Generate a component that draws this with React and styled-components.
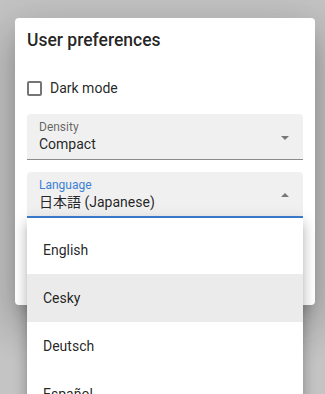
import React from "react";
import styled, { createGlobalStyle } from "styled-components";

const Global = createGlobalStyle`
  html, body {
    margin: 0;
    padding: 0;
    background: #c4c4c4;
    font-family: Roboto, "Noto Sans CJK JP", sans-serif;
    overflow: hidden;
  }
`;

const Page = styled.div`
  width: 325px;
  height: 394px;
  padding: 18px 10px 0 15px;
  box-sizing: border-box;
`;

const Dialog = styled.div`
  position: relative;
  width: 300px;
  height: 287px;
  box-sizing: border-box;
  padding: 0 12px;
  background: #fff;
  border-radius: 4px;
  box-shadow: 0 11px 15px -7px rgba(0, 0, 0, 0.2),
    0 24px 38px 3px rgba(0, 0, 0, 0.14), 0 9px 46px 8px rgba(0, 0, 0, 0.12);
  display: flex;
  flex-direction: column;
`;

const Title = styled.h2`
  margin: 10px 0 0;
  font-size: 17.5px;
  line-height: 24px;
  font-weight: 500;
  color: rgba(0, 0, 0, 0.87);
`;

const CheckRow = styled.label`
  margin-top: 26px;
  display: flex;
  align-items: center;
  gap: 8px;
  font-size: 14px;
  color: rgba(0, 0, 0, 0.87);
  height: 20px;
`;

const Box = styled.span`
  width: 15px;
  height: 15px;
  box-sizing: border-box;
  border: 2px solid rgba(0, 0, 0, 0.54);
  border-radius: 2px;
`;

const Field = styled.div`
  margin-top: ${(p) => p.$mt}px;
  height: 46px;
  box-sizing: border-box;
  background: #f0f0f0;
  border-radius: 4px 4px 0 0;
  border-bottom: ${(p) => (p.$focused ? "2px solid #3d7fd3" : "1px solid #8c8c8c")};
  padding: 6px 12px 0;
  display: flex;
  align-items: center;
  position: relative;
`;

const FieldText = styled.div`
  flex: 1;
  display: flex;
  flex-direction: column;
  align-self: flex-start;
`;

const Label = styled.span`
  font-size: 12px;
  line-height: 14px;
  color: ${(p) => (p.$focused ? "#3d7fd3" : "rgba(0, 0, 0, 0.6)")};
`;

const Value = styled.span`
  font-size: 14px;
  line-height: 20px;
  color: rgba(0, 0, 0, 0.87);
`;

const Arrow = styled.span`
  width: 0;
  height: 0;
  margin-right: 2px;
  margin-top: -4px;
  border-left: 4px solid transparent;
  border-right: 4px solid transparent;
  ${(p) =>
    p.$up
      ? "border-bottom: 4px solid rgba(0,0,0,0.5);"
      : "border-top: 4px solid rgba(0,0,0,0.5);"}
`;

const Menu = styled.ul`
  position: absolute;
  left: 12px;
  top: 200px;
  width: 276px;
  margin: 0;
  padding: 8px 0;
  list-style: none;
  background: #fff;
  box-shadow: 0 5px 5px -3px rgba(0, 0, 0, 0.2),
    0 8px 10px 1px rgba(0, 0, 0, 0.14), 0 3px 14px 2px rgba(0, 0, 0, 0.12);
`;

const Item = styled.li`
  height: 48px;
  padding: 0 16px;
  display: flex;
  align-items: center;
  font-size: 14px;
  color: rgba(0, 0, 0, 0.87);
  background: ${(p) => (p.$active ? "#ebebeb" : "transparent")};
`;

const languages = ["English", "Cesky", "Deutsch", "Español"];

export default function App() {
  return (
    <>
      <Global />
      <Page>
        <Dialog>
          <Title>User preferences</Title>
          <CheckRow>
            <Box />
            Dark mode
          </CheckRow>
          <Field $mt={16}>
            <FieldText>
              <Label>Density</Label>
              <Value>Compact</Value>
            </FieldText>
            <Arrow />
          </Field>
          <Field $mt={12} $focused>
            <FieldText>
              <Label $focused>Language</Label>
              <Value>日本語 (Japanese)</Value>
            </FieldText>
            <Arrow $up />
          </Field>
          <Menu>
            {languages.map((l) => (
              <Item key={l} $active={l === "Cesky"}>
                {l}
              </Item>
            ))}
          </Menu>
        </Dialog>
      </Page>
    </>
  );
}
